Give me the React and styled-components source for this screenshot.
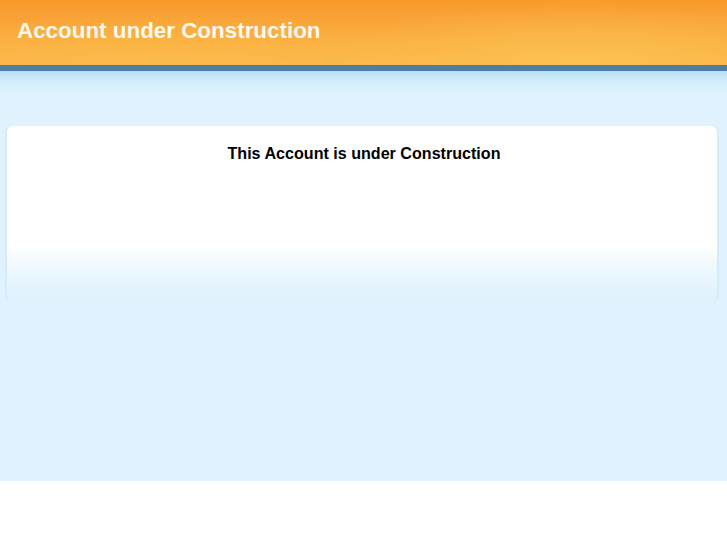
import React from 'react';
import styled, { createGlobalStyle } from 'styled-components';

const Global = createGlobalStyle`
    body {
        margin: 0;
        background: #ffffff;
        font-family: "Liberation Sans", Arial, sans-serif;
    }
`;

const Page = styled.div`
    display: flex;
    flex-direction: column;
    height: 481px;
    background: #dff2fe;
`;

const Header = styled.header`
    height: 71px;
    display: flex;
    align-items: center;
    padding: 0 0 4px 17px;
    box-sizing: border-box;
    background:
        radial-gradient(ellipse 280px 60px at 580px 62px, rgba(253, 196, 84, 0.85), rgba(253, 196, 84, 0) 100%),
        radial-gradient(ellipse 320px 50px at 170px 62px, rgba(252, 190, 75, 0.75), rgba(252, 190, 75, 0) 100%),
        linear-gradient(180deg, #f89a2a 0%, #f9a53a 40%, #fbb646 100%);
    border-bottom: 6px solid #4e7ea7;
`;

const HeaderTitle = styled.h1`
    margin: 0;
    font-size: 22.4px;
    font-weight: bold;
    color: #fff9ef;
`;

const Body = styled.main`
    flex: 1;
    padding: 55px 10px 0 7px;
    background: linear-gradient(180deg, #b7dff3 0px, #d6eefb 12px, #dff2fe 22px);
`;

const Card = styled.section`
    height: 175px;
    border-radius: 6px;
    background: linear-gradient(180deg, #ffffff 0px, #ffffff 118px, #e9f6fe 150px, #dff2fe 175px);
    box-shadow: -2px 0 0 #d4ebf8, 2px 0 0 #d4ebf8;
    text-align: center;
    padding: 18px 0 0 4px;
    box-sizing: border-box;
`;

const CardTitle = styled.h2`
    margin: 0;
    font-size: 16.1px;
    font-weight: bold;
    color: #000;
`;

export default function App() {
    return (
        <Page>
            <Global />
            <Header>
                <HeaderTitle>Account under Construction</HeaderTitle>
            </Header>
            <Body>
                <Card>
                    <CardTitle>This Account is under Construction</CardTitle>
                </Card>
            </Body>
        </Page>
    );
}
